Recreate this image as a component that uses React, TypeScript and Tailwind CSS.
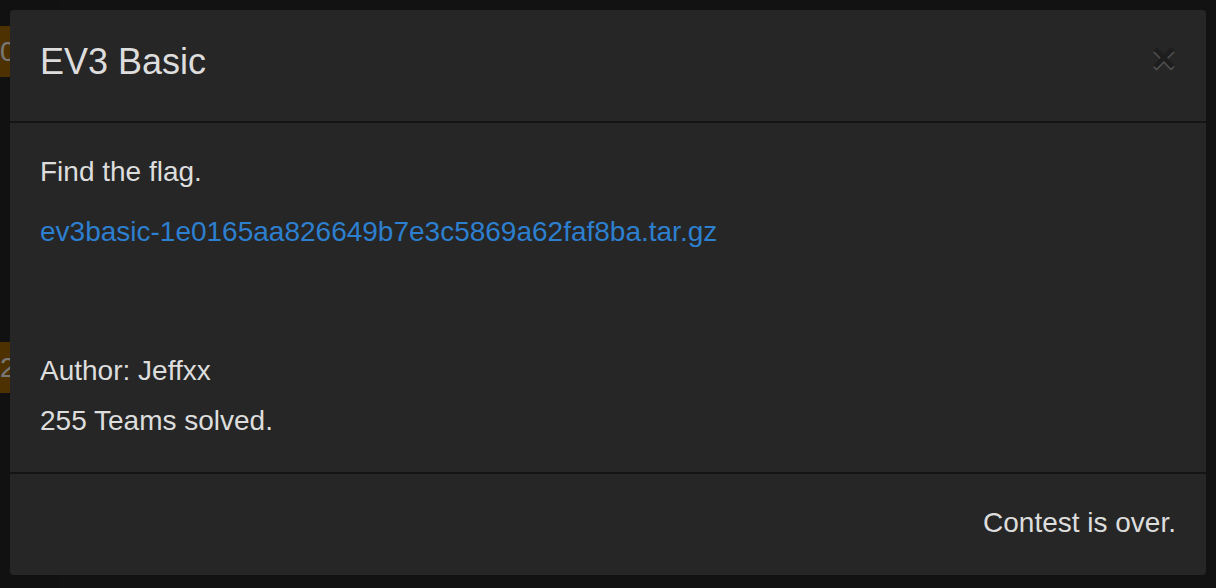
import React from 'react';

// Page under the modal: only the left edge of the challenge list peeks out
const badges = [
  { id: 1, label: '00', top: 'mt-[26px]' },
  { id: 2, label: '27', top: 'mt-[265px]' },
];

const ChallengeBoard: React.FC = () => (
  <div className="h-[588px] w-[1216px] bg-[#222] flex">
    <div className="w-[60px] flex flex-col">
      {badges.map((b) => (
        <div
          key={b.id}
          className={`${b.top} h-[51px] w-[40px] bg-[#9a6200] overflow-hidden flex items-center justify-start`}
        >
          <span className="text-[28px] leading-none text-[#eee] whitespace-nowrap">{b.label}</span>
        </div>
      ))}
    </div>
    <div className="flex-1 bg-[#242424]" />
  </div>
);

const App: React.FC = () => {
  return (
    <div
      className="relative h-[588px] w-[1216px] overflow-hidden"
      style={{ fontFamily: '"Liberation Sans", Arial, Helvetica, sans-serif' }}
    >
      <ChallengeBoard />

      {/* backdrop */}
      <div className="absolute inset-0 bg-black/50" />

      {/* modal */}
      <div className="absolute left-[10px] top-[10px] w-[1196px] h-[565px] bg-[#262626] rounded-[4px] flex flex-col text-[#dddddd]">
        <div className="h-[113px] border-b-2 border-[#141414] px-[30px] pt-[26px] flex items-start justify-between">
          <h4 className="text-[36px] leading-[51px]">EV3 Basic</h4>
          <button
            type="button"
            className="text-[42px] font-bold leading-none text-black opacity-20 mt-[1px]"
            style={{ textShadow: '0 2px 0 #fff' }}
          >
            ×
          </button>
        </div>

        <div className="px-[30px] pt-[29px] pb-[31px] text-[28px] leading-[40px] flex flex-col">
          <p>Find the flag.</p>
          <p className="mt-[20px]">
            <a href="#" className="text-[#2d7fcf]">
              ev3basic-1e0165aa826649b7e3c5869a62faf8ba.tar.gz
            </a>
          </p>
          <p className="mt-[99px]">Author: Jeffxx</p>
          <p className="mt-[10px]">255 Teams solved.</p>
        </div>

        <div className="border-t-2 border-[#141414] px-[30px] pt-[29px] flex justify-end text-[28px] leading-[40px]">
          <span>Contest is over.</span>
        </div>
      </div>
    </div>
  );
};

export default App;
